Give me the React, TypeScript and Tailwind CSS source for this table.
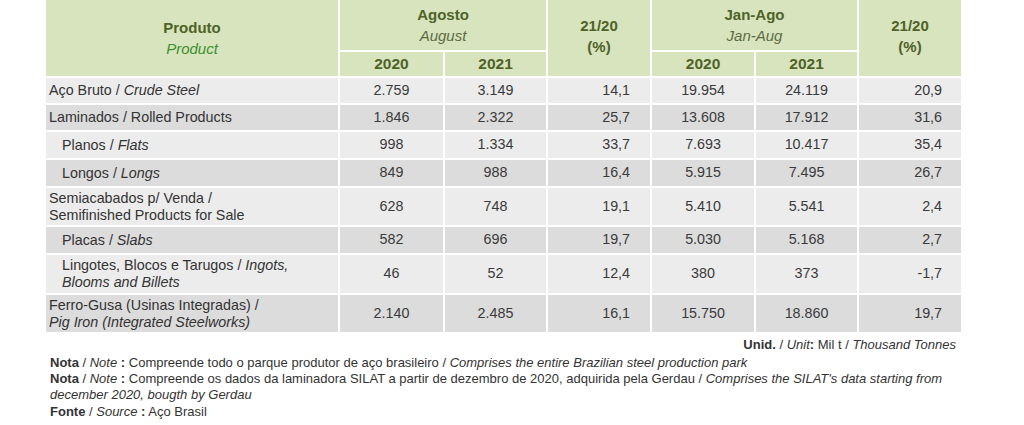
import React from "react";

type Row = {
  pt: React.ReactNode;
  indent?: boolean;
  h: string;
  dark: boolean;
  v: [string, string, string, string, string, string];
};

const rows: Row[] = [
  { pt: <>Aço Bruto / <i>Crude Steel</i></>, h: "h-[27px]", dark: false, v: ["2.759", "3.149", "14,1", "19.954", "24.119", "20,9"] },
  { pt: <>Laminados / Rolled Products</>, h: "h-[27px]", dark: true, v: ["1.846", "2.322", "25,7", "13.608", "17.912", "31,6"] },
  { pt: <>Planos / <i>Flats</i></>, indent: true, h: "h-[28px]", dark: false, v: ["998", "1.334", "33,7", "7.693", "10.417", "35,4"] },
  { pt: <>Longos / <i>Longs</i></>, indent: true, h: "h-[28px]", dark: true, v: ["849", "988", "16,4", "5.915", "7.495", "26,7"] },
  { pt: <>Semiacabados p/ Venda /<br />Semifinished Products for Sale</>, h: "h-[39px]", dark: false, v: ["628", "748", "19,1", "5.410", "5.541", "2,4"] },
  { pt: <>Placas / <i>Slabs</i></>, indent: true, h: "h-[28px]", dark: true, v: ["582", "696", "19,7", "5.030", "5.168", "2,7"] },
  { pt: <>Lingotes, Blocos e Tarugos / <i>Ingots,</i><br /><i>Blooms and Billets</i></>, indent: true, h: "h-[40px]", dark: false, v: ["46", "52", "12,4", "380", "373", "-1,7"] },
  { pt: <>Ferro-Gusa (Usinas Integradas) /<br /><i>Pig Iron (Integrated Steelworks)</i></>, h: "h-[39px]", dark: true, v: ["2.140", "2.485", "16,1", "15.750", "18.860", "19,7"] },
];

export default function App() {
  const hb = "font-bold text-[#4f6228]";
  return (
    <div className="w-[1024px] h-[425px] bg-white overflow-hidden text-[#333333]" style={{ fontFamily: '"Liberation Sans", Arial, sans-serif' }}>
      <table className="ml-[46px] w-[915px] table-fixed border-collapse">
        <colgroup>
          <col className="w-[293px]" />
          <col className="w-[105px]" />
          <col className="w-[103px]" />
          <col className="w-[104px]" />
          <col className="w-[104px]" />
          <col className="w-[103px]" />
          <col className="w-[103px]" />
        </colgroup>
        <thead>
          <tr className="h-[51px] bg-[#d7e4bd] text-[15px] leading-[21px]">
            <th rowSpan={2} className="border-2 border-white border-t-0 border-l-0 text-center font-normal">
              <div className={hb}>Produto</div>
              <div className="italic text-[#3d8f2e]">Product</div>
            </th>
            <th colSpan={2} className="border-2 border-white border-t-0 text-center font-normal">
              <div className={hb}>Agosto</div>
              <div className="italic text-[#5d6b42]">August</div>
            </th>
            <th rowSpan={2} className="border-2 border-white border-t-0 text-center font-normal pb-[4px]">
              <div className={hb}>21/20</div>
              <div className={hb}>(%)</div>
            </th>
            <th colSpan={2} className="border-2 border-white border-t-0 text-center font-normal">
              <div className={hb}>Jan-Ago</div>
              <div className="italic text-[#5d6b42]">Jan-Aug</div>
            </th>
            <th rowSpan={2} className="border-2 border-white border-t-0 border-r-0 text-center font-normal pb-[4px]">
              <div className={hb}>21/20</div>
              <div className={hb}>(%)</div>
            </th>
          </tr>
          <tr className="h-[26px] bg-[#d7e4bd] text-[15.5px]">
            <th className={`border-2 border-white text-center ${hb}`}>2020</th>
            <th className={`border-2 border-white text-center ${hb}`}>2021</th>
            <th className={`border-2 border-white text-center ${hb}`}>2020</th>
            <th className={`border-2 border-white text-center ${hb}`}>2021</th>
          </tr>
        </thead>
        <tbody className="text-[14.3px]">
          {rows.map((r, i) => (
            <tr key={i} className={`${r.h} ${r.dark ? "bg-[#dcdcdc]" : "bg-[#ececec]"}`}>
              <td className={`border-2 border-white border-l-0 leading-[17px] ${r.indent ? "pl-[16px]" : "pl-[3px]"}`}>{r.pt}</td>
              <td className="border-2 border-white text-center text-[#3a3a3a]">{r.v[0]}</td>
              <td className="border-2 border-white text-center text-[#3a3a3a]">{r.v[1]}</td>
              <td className="border-2 border-white text-right pr-[20px] text-[#3a3a3a]">{r.v[2]}</td>
              <td className="border-2 border-white text-center text-[#3a3a3a]">{r.v[3]}</td>
              <td className="border-2 border-white text-center text-[#3a3a3a]">{r.v[4]}</td>
              <td className="border-2 border-white border-r-0 text-right pr-[19px] text-[#3a3a3a]">{r.v[5]}</td>
            </tr>
          ))}
        </tbody>
      </table>
      <div className="w-[956px] text-right text-[13px] leading-[17px] mt-[2px] text-[#333333]">
        <b>Unid.</b> / <i>Unit</i><b>:</b> Mil t / <i>Thousand Tonnes</i>
      </div>
      <div className="pl-[50px] mt-[2px] text-[13px] leading-[16px] text-[#333333] whitespace-nowrap">
        <p><b>Nota</b> / <i>Note</i> <b>:</b> Compreende todo o parque produtor de aço brasileiro / <i>Comprises the entire Brazilian steel production park</i></p>
        <p><b>Nota</b> / <i>Note</i> <b>:</b> Compreende os dados da laminadora SILAT a partir de dezembro de 2020, adquirida pela Gerdau / <i>Comprises the SILAT's data starting from</i></p>
        <p><i>december 2020, bougth by Gerdau</i></p>
        <p className="mt-[1px]"><b>Fonte</b> / <i>Source</i> <b>:</b> Aço Brasil</p>
      </div>
    </div>
  );
}
